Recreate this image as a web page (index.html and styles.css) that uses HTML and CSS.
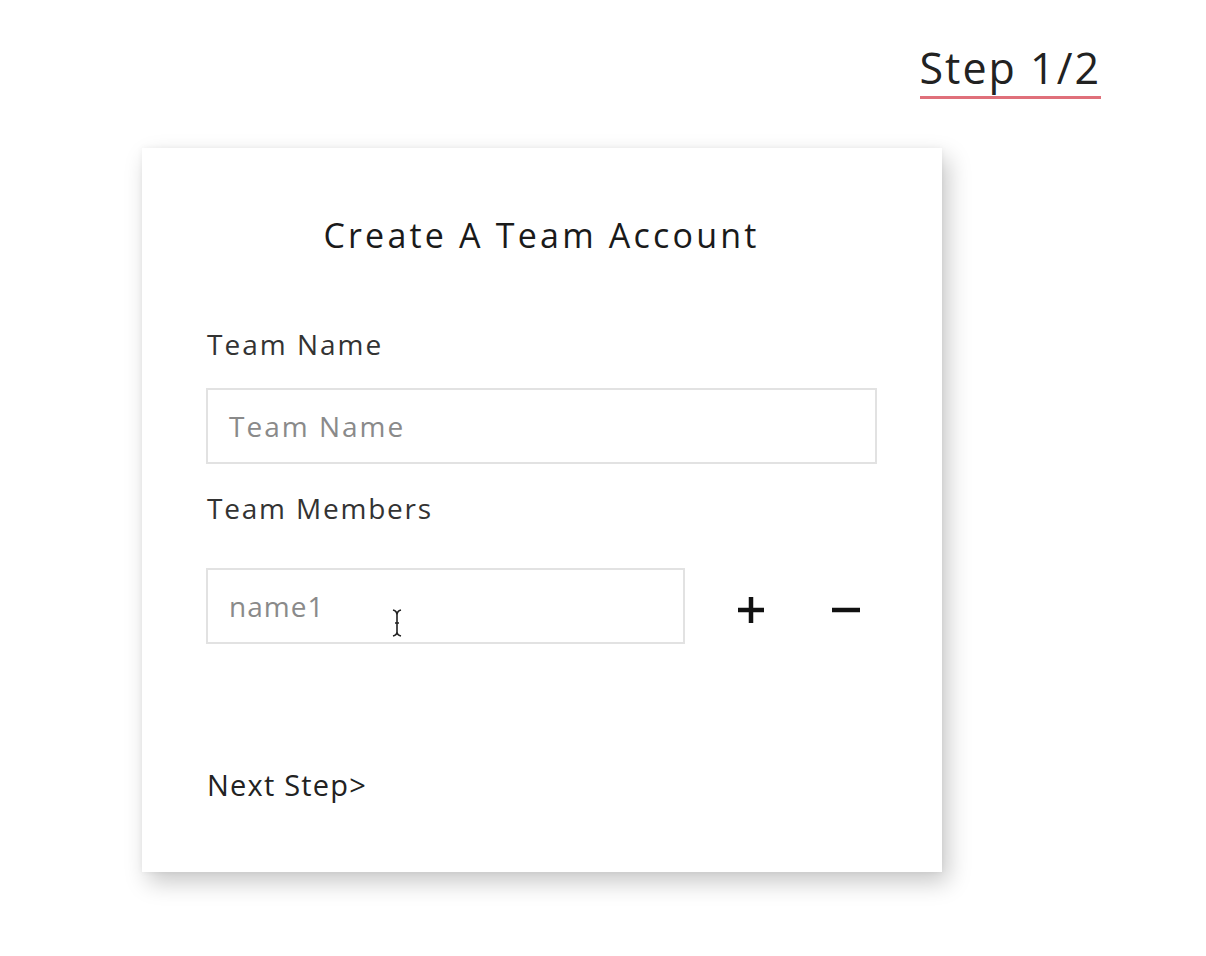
FILE: index.html
```html
<!DOCTYPE html>
<html>
<head>
<meta charset="utf-8">
<link rel="stylesheet" href="styles.css">
</head>
<body>
<div class="page">
  <header class="top">
    <span class="step">Step 1/2</span>
  </header>
  <main class="card">
    <h1 class="title">Create A Team Account</h1>
    <label class="label">Team Name</label>
    <div class="input wide"><span class="ph">Team Name</span></div>
    <label class="label members">Team Members</label>
    <div class="member-row">
      <div class="input narrow"><span class="ph ph-small">name1</span>
        <svg class="cursor" width="12" height="30" viewBox="0 0 12 30"><path d="M2 2 Q6 3 6 7 V24 Q6 27 2 28 M10 2 Q6 3 6 7 M6 24 Q6 27 10 28 M4 15 H8" fill="none" stroke="#222" stroke-width="1.6"/></svg>
      </div>
      <span class="btn plus">
        <svg width="28" height="28" viewBox="0 0 28 28"><path d="M14 1 V27 M1 14 H27" stroke="#111" stroke-width="4.5"/></svg>
      </span>
      <span class="btn minus">
        <svg width="30" height="28" viewBox="0 0 30 28"><path d="M1 14 H29" stroke="#111" stroke-width="4.5"/></svg>
      </span>
    </div>
    <div class="next">Next Step&gt;</div>
  </main>
</div>
</body>
</html>
```
FILE: styles.css
```css
* { box-sizing: border-box; }
html, body { margin: 0; padding: 0; background: #fff; }
body {
  font-family: "Open Sans", "Noto Sans", sans-serif;
  color: #222;
  width: 1206px;
  height: 956px;
  overflow: hidden;
}
.page {
  padding: 0 0 0 142px;
}
.top {
  display: flex;
  justify-content: flex-end;
  padding: 40px 105px 0 0;
  height: 148px;
}
.step {
  font-size: 43px;
  line-height: 56px;
  height: 59px;
  color: #222;
  border-bottom: 3px solid #e0707a;
  letter-spacing: 2px;
}
.card {
  width: 800px;
  height: 724px;
  background: #fff;
  box-shadow: 6px 10px 22px rgba(0,0,0,0.22), 0 0 6px rgba(0,0,0,0.05);
  padding: 64px 65px 0 64px;
  display: flex;
  flex-direction: column;
}
.title {
  margin: 0;
  font-weight: 400;
  font-size: 34px;
  line-height: 46px;
  text-align: center;
  letter-spacing: 3.2px;
  color: #1a1a1a;
}
.label {
  display: block;
  font-size: 28px;
  line-height: 40px;
  color: #333;
  margin-top: 66px;
  padding-left: 1px;
  letter-spacing: 2px;
}
.label.members { margin-top: 24px; letter-spacing: 1.8px; }
.input {
  position: relative;
  height: 76px;
  border: 2px solid #e2e2e2;
  display: flex;
  align-items: center;
  padding-left: 21px;
  margin-top: 24px;
}
.input.wide { width: 671px; }
.input.narrow { width: 479px; margin-top: 0; }
.ph {
  font-size: 28px;
  color: #8a8a8a;
  letter-spacing: 2px;
}
.ph.ph-small { letter-spacing: 1px; }
.cursor {
  position: absolute;
  left: 183px;
  top: 38px;
}
.member-row {
  display: flex;
  align-items: center;
  margin-top: 40px;
}
.btn {
  display: flex;
  align-items: center;
  justify-content: center;
  margin-top: 8px;
}
.btn.plus { margin-left: 52px; }
.btn.minus { margin-left: 66px; }
.next {
  margin-top: 121px;
  padding-left: 1px;
  font-size: 29px;
  line-height: 40px;
  color: #222;
  letter-spacing: 1.2px;
}
```
